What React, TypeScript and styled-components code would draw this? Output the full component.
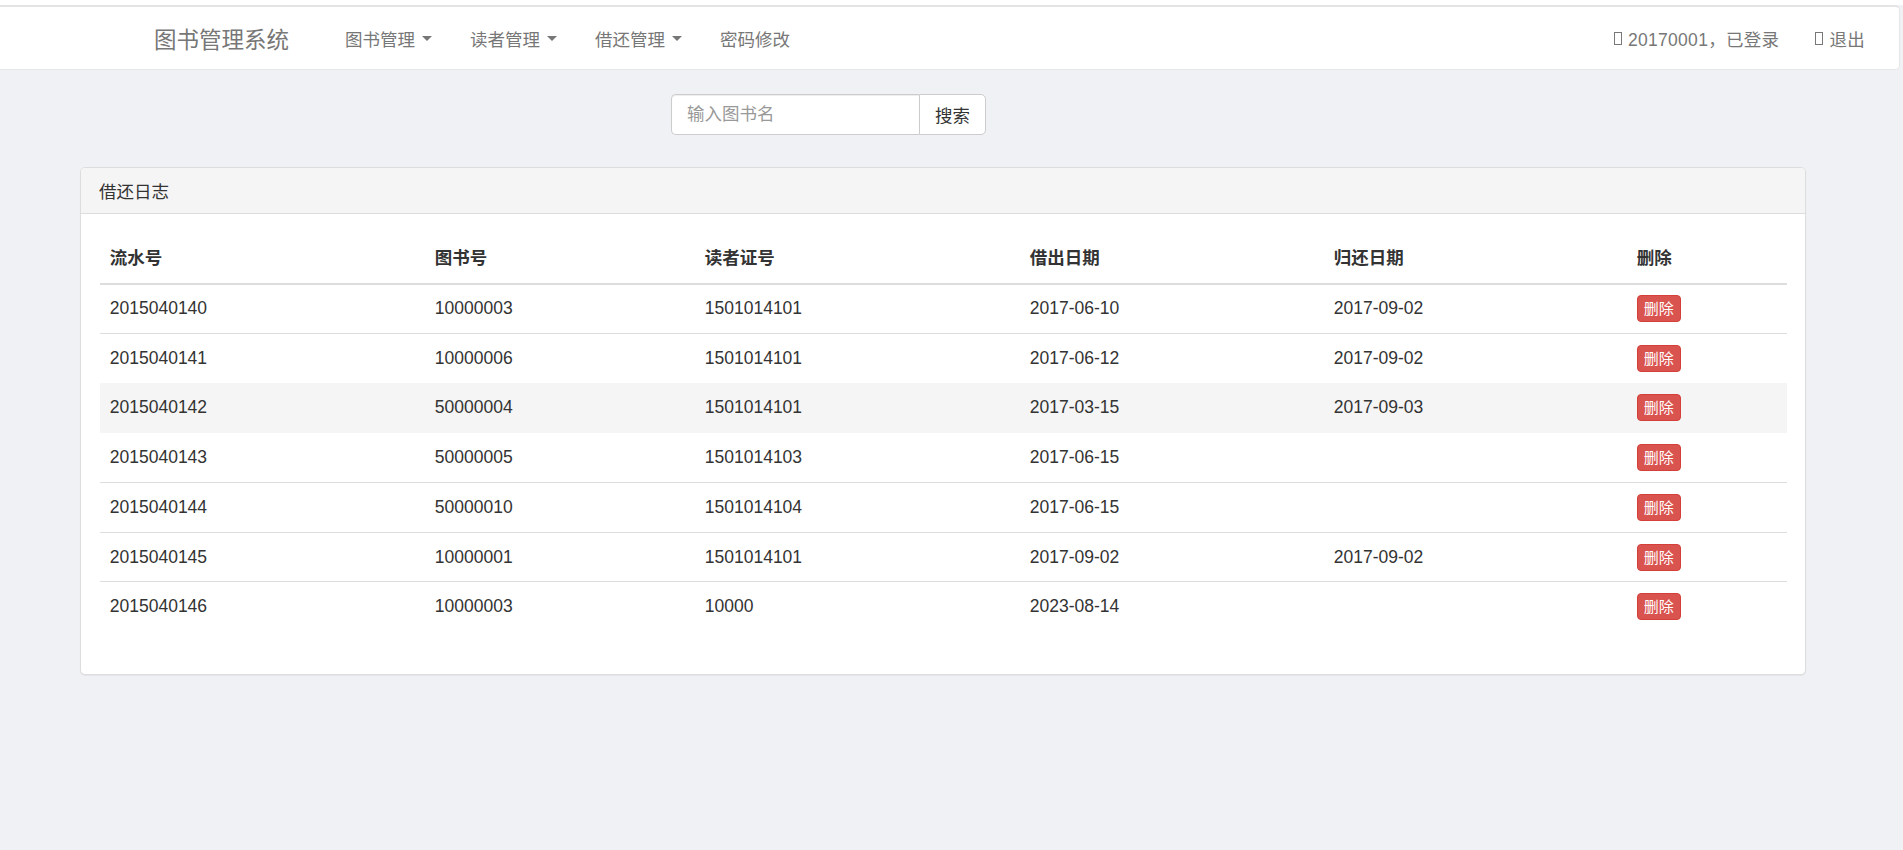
import React from 'react';
import styled, { createGlobalStyle } from 'styled-components';

type Log = {
  serial: string;
  book: string;
  reader: string;
  lend: string;
  back: string;
};

const logs: Log[] = [
  { serial: '2015040140', book: '10000003', reader: '1501014101', lend: '2017-06-10', back: '2017-09-02' },
  { serial: '2015040141', book: '10000006', reader: '1501014101', lend: '2017-06-12', back: '2017-09-02' },
  { serial: '2015040142', book: '50000004', reader: '1501014101', lend: '2017-03-15', back: '2017-09-03' },
  { serial: '2015040143', book: '50000005', reader: '1501014103', lend: '2017-06-15', back: '' },
  { serial: '2015040144', book: '50000010', reader: '1501014104', lend: '2017-06-15', back: '' },
  { serial: '2015040145', book: '10000001', reader: '1501014101', lend: '2017-09-02', back: '2017-09-02' },
  { serial: '2015040146', book: '10000003', reader: '10000', lend: '2023-08-14', back: '' },
];

const columns = [
  { title: '流水号', width: 325 },
  { title: '图书号', width: 270 },
  { title: '读者证号', width: 325 },
  { title: '借出日期', width: 304 },
  { title: '归还日期', width: 303 },
  { title: '删除', width: 160 },
];

const menus = [
  { label: '图书管理', dropdown: true },
  { label: '读者管理', dropdown: true },
  { label: '借还管理', dropdown: true },
  { label: '密码修改', dropdown: false },
];

const App = () => {
  return (
    <>
      <GlobalStyle />
      <Page>
        <TopStrip />
        <Navbar>
          <Brand>图书管理系统</Brand>
          <Menu>
            {menus.map((m) => (
              <MenuItem key={m.label}>
                {m.label}
                {m.dropdown && <Caret />}
              </MenuItem>
            ))}
          </Menu>
          <UserArea>
            <UserLink>
              <GlyphBox />
              20170001，已登录
            </UserLink>
            <UserLink>
              <GlyphBox />
              退出
            </UserLink>
          </UserArea>
        </Navbar>

        <SearchForm onSubmit={(e) => e.preventDefault()}>
          <SearchInput placeholder="输入图书名" />
          <SearchButton type="submit">搜索</SearchButton>
        </SearchForm>

        <Panel>
          <PanelHeading>借还日志</PanelHeading>
          <PanelBody>
            <Table>
              <colgroup>
                {columns.map((c) => (
                  <col key={c.title} style={{ width: c.width }} />
                ))}
              </colgroup>
              <thead>
                <tr>
                  {columns.map((c) => (
                    <Th key={c.title}>{c.title}</Th>
                  ))}
                </tr>
              </thead>
              <tbody>
                {logs.map((log, i) => (
                  <Row key={log.serial} $active={i === 2}>
                    <Td>{log.serial}</Td>
                    <Td>{log.book}</Td>
                    <Td>{log.reader}</Td>
                    <Td>{log.lend}</Td>
                    <Td>{log.back}</Td>
                    <Td>
                      <DeleteButton type="button">删除</DeleteButton>
                    </Td>
                  </Row>
                ))}
              </tbody>
            </Table>
          </PanelBody>
        </Panel>
      </Page>
    </>
  );
};

export default App;

const GlobalStyle = createGlobalStyle`
  html, body {
    margin: 0;
    padding: 0;
    background: #f0f1f5;
  }
  body {
    font-family: "Liberation Sans", "Noto Sans CJK SC", sans-serif;
    font-size: 17.5px;
    color: #333;
  }
  * {
    box-sizing: border-box;
  }
`;

const Page = styled.div`
  min-height: 100vh;
  background: #f0f1f5;
  overflow: hidden;
`;

const TopStrip = styled.div`
  height: 5px;
  background: #fff;
`;

const Navbar = styled.nav`
  height: 65px;
  margin-right: 3px;
  background: #fff;
  border-top: 2px solid #e4e4e4;
  border-right: 1px solid #e7e7e7;
  border-bottom: 1px solid #e7e7e7;
  border-radius: 0 5px 5px 0;
  display: flex;
  align-items: center;
  padding-left: 154px;
  padding-right: 34px;
`;

const Brand = styled.div`
  font-size: 22.5px;
  color: #777;
  margin-right: 56px;
  white-space: nowrap;
`;

const Menu = styled.ul`
  list-style: none;
  margin: 0;
  padding: 0;
  display: flex;
`;

const MenuItem = styled.li`
  width: 125px;
  color: #777;
  font-size: 17.5px;
  display: flex;
  align-items: center;
  white-space: nowrap;
`;

const Caret = styled.span`
  display: inline-block;
  width: 0;
  height: 0;
  margin-left: 7px;
  border-top: 5px solid #777;
  border-left: 5px solid transparent;
  border-right: 5px solid transparent;
`;

const UserArea = styled.div`
  margin-left: auto;
  display: flex;
  gap: 36px;
`;

const UserLink = styled.span`
  color: #777;
  font-size: 17.5px;
  display: flex;
  align-items: center;
  white-space: nowrap;
  letter-spacing: 0.3px;
`;

const GlyphBox = styled.span`
  display: inline-block;
  width: 8px;
  height: 13px;
  border: 1px solid #777;
  margin-right: 6px;
  margin-top: 1px;
`;

const SearchForm = styled.form`
  display: flex;
  margin: 24px 0 0 671px;
  width: 315px;
  height: 41px;
`;

const SearchInput = styled.input`
  flex: 1;
  min-width: 0;
  height: 100%;
  border: 1px solid #ccc;
  border-right: 0;
  border-radius: 5px 0 0 5px;
  padding: 0 15px;
  font-family: "Liberation Sans", "Noto Sans CJK SC", sans-serif;
  font-size: 17.5px;
  color: #555;
  background: #fff;
  outline: none;
  box-shadow: inset 0 1px 1px rgba(0, 0, 0, 0.075);
  &::placeholder {
    color: #999;
  }
`;

const SearchButton = styled.button`
  width: 67px;
  height: 100%;
  border: 1px solid #ccc;
  border-radius: 0 5px 5px 0;
  background: #fff;
  color: #333;
  font-family: "Liberation Sans", "Noto Sans CJK SC", sans-serif;
  font-size: 17.5px;
  padding: 0;
`;

const Panel = styled.section`
  margin: 32px 0 0 80px;
  width: 1726px;
  background: #fff;
  border: 1px solid #ddd;
  border-radius: 5px;
  box-shadow: 0 1px 1px rgba(0, 0, 0, 0.05);
`;

const PanelHeading = styled.div`
  height: 46px;
  padding: 0 18px;
  display: flex;
  align-items: center;
  background: #f5f5f5;
  border-bottom: 1px solid #ddd;
  border-radius: 4px 4px 0 0;
  color: #333;
  font-size: 17.5px;
`;

const PanelBody = styled.div`
  padding: 18.75px 18.75px 18px;
`;

const Table = styled.table`
  width: 100%;
  table-layout: fixed;
  border-collapse: collapse;
  margin-bottom: 24px;
`;

const Th = styled.th`
  text-align: left;
  font-weight: bold;
  font-size: 17.5px;
  line-height: 25px;
  padding: 13px 10px 12px;
  border-bottom: 2px solid #ddd;
  color: #333;
`;

const Row = styled.tr<{ $active?: boolean }>`
  background: ${(p) => (p.$active ? '#f5f5f5' : '#fff')};
  & + & td {
    border-top: 1px solid #ddd;
  }
`;

const Td = styled.td`
  height: 49.7px;
  padding: 0 10px;
  vertical-align: middle;
  font-size: 17.5px;
  line-height: 25px;
  color: #333;
`;

const DeleteButton = styled.button`
  display: inline-block;
  height: 27px;
  padding: 0 6px;
  font-family: "Liberation Sans", "Noto Sans CJK SC", sans-serif;
  font-size: 15px;
  line-height: 25px;
  color: #fff;
  background: #d9534f;
  border: 1px solid #d43f3a;
  border-radius: 4px;
  vertical-align: middle;
`;
